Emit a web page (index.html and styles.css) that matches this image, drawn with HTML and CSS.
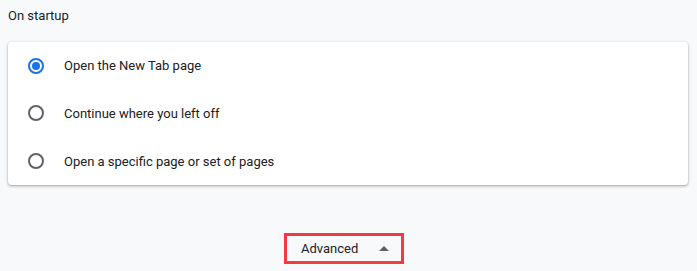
FILE: index.html
```html
<!DOCTYPE html>
<html>
<head>
<meta charset="utf-8">
<link rel="stylesheet" href="styles.css">
</head>
<body>
<div class="page">
  <div class="section-title">On startup</div>
  <div class="card">
    <div class="row">
      <span class="radio checked"></span>
      <span class="label">Open the New Tab page</span>
    </div>
    <div class="row">
      <span class="radio"></span>
      <span class="label">Continue where you left off</span>
    </div>
    <div class="row">
      <span class="radio"></span>
      <span class="label">Open a specific page or set of pages</span>
    </div>
  </div>
  <div class="advanced-wrap">
    <div class="advanced">
      <span class="adv-label">Advanced</span>
      <svg class="arrow" width="10" height="5" viewBox="0 0 10 5"><path d="M0 5 L5 0 L10 5 Z" fill="#5f6368"/></svg>
    </div>
  </div>
</div>
</body>
</html>
```
FILE: styles.css
```css
html, body {
  margin: 0;
  padding: 0;
  background: #f8f9fa;
}
body {
  font-family: Roboto, "Liberation Sans", sans-serif;
  font-size: 13px;
  color: #202124;
}
.page {
  padding: 0 9px 0 8px;
}
.section-title {
  height: 32px;
  line-height: 32px;
  font-size: 13px;
  color: #202124;
  margin-bottom: 10px;
}
.card {
  background: #fff;
  border-radius: 4px;
  box-shadow: 0 1px 2px 0 rgba(60,64,67,0.3), 0 1px 3px 1px rgba(60,64,67,0.15);
  height: 143px;
  display: flex;
  flex-direction: column;
}
.row {
  height: 48px;
  display: flex;
  align-items: center;
  padding-left: 20px;
}
.row:first-child {
  height: 47px;
}
.radio {
  box-sizing: border-box;
  width: 16px;
  height: 16px;
  border-radius: 50%;
  border: 2px solid #5f6368;
  margin-right: 20px;
  flex: none;
  position: relative;
}
.radio.checked {
  border-color: #1a73e8;
}
.radio.checked::after {
  content: "";
  position: absolute;
  left: 2px;
  top: 2px;
  width: 8px;
  height: 8px;
  border-radius: 50%;
  background: #1a73e8;
}
.label {
  color: #202124;
}
.advanced-wrap {
  display: flex;
  justify-content: center;
  padding-top: 48px;
  padding-right: 8px;
}
.advanced {
  box-sizing: border-box;
  width: 120px;
  height: 31px;
  border: 3px solid #f03c3c;
  display: flex;
  align-items: center;
  padding-left: 14px;
}
.adv-label {
  color: #202124;
}
.arrow {
  margin-left: 21px;
  margin-top: -1px;
}
```
